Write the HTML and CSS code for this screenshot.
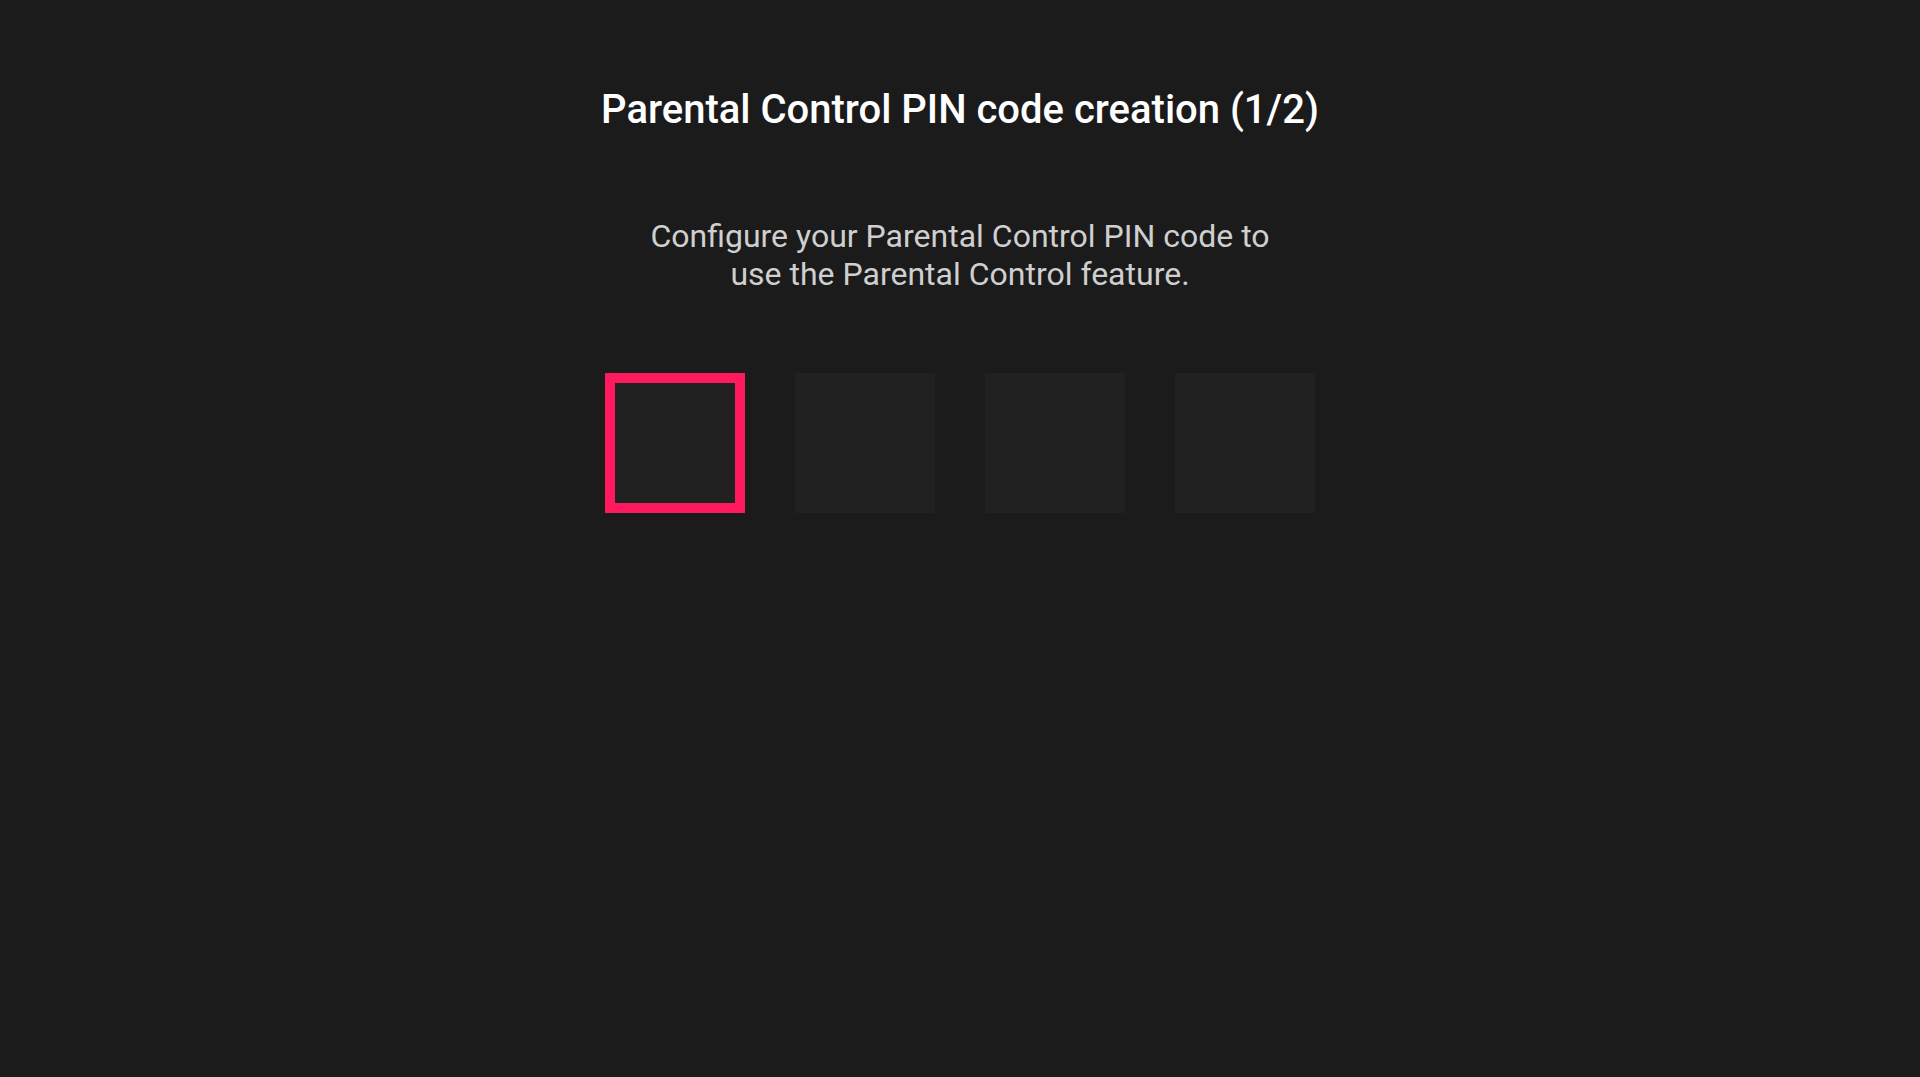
FILE: index.html
```html
<!DOCTYPE html>
<html lang="en">
<head>
<meta charset="utf-8">
<title>Parental Control PIN code creation</title>
<link rel="stylesheet" href="styles.css">
</head>
<body>
<main class="screen">
  <h1 class="title">Parental Control PIN code creation (1/2)</h1>
  <p class="desc">Configure your Parental Control PIN code to<br>use the Parental Control feature.</p>
  <div class="pin">
    <div class="digit digit--active"></div>
    <div class="digit"></div>
    <div class="digit"></div>
    <div class="digit"></div>
  </div>
</main>
</body>
</html>
```
FILE: styles.css
```css
html, body {
  margin: 0;
  padding: 0;
  background: #1b1b1b;
  height: 100%;
}
.screen {
  display: flex;
  flex-direction: column;
  align-items: center;
  padding-top: 87px;
  font-family: Roboto, "Noto Sans", sans-serif;
}
.title {
  margin: 0;
  font-size: 40px;
  font-weight: 500;
  line-height: 46px;
  color: #ffffff;
}
.desc {
  margin: 84px 0 0;
  font-size: 32px;
  font-weight: 400;
  line-height: 38px;
  color: #cfcfcf;
  text-align: center;
}
.pin {
  margin-top: 80px;
  display: flex;
  gap: 50px;
}
.digit {
  width: 140px;
  height: 140px;
  box-sizing: border-box;
  background: #212121;
}
.digit--active {
  border: 10px solid #ff1a5f;
}
```
